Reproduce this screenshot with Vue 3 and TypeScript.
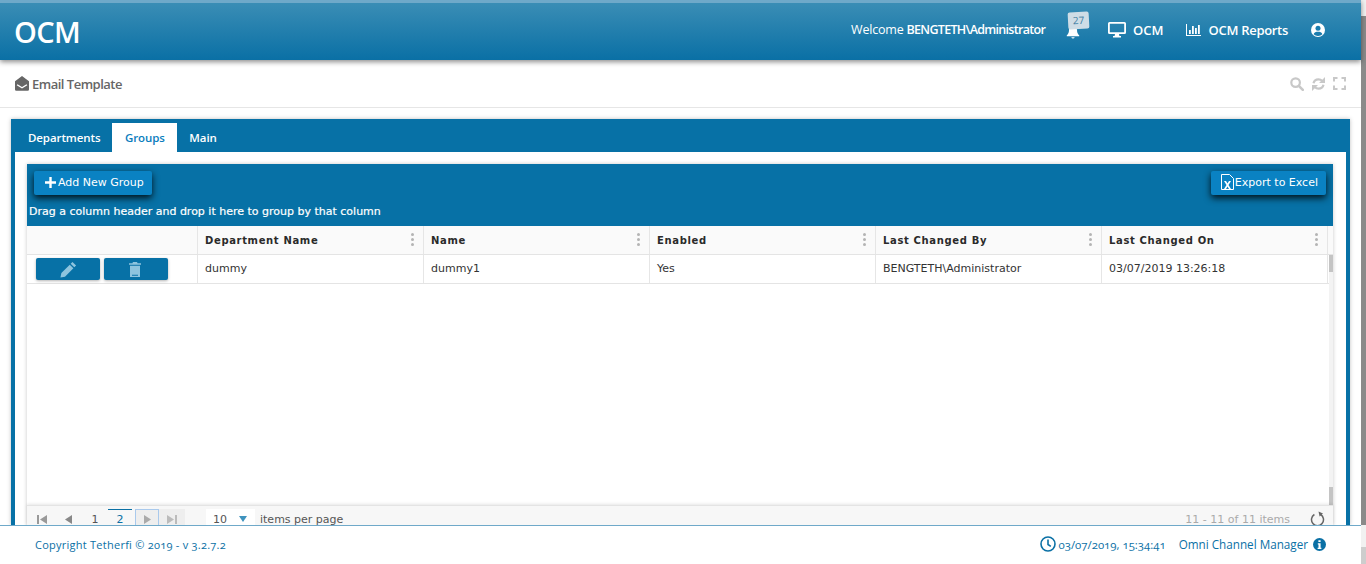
<script setup lang="ts">
interface Column {
  title: string
  value: string
}

const columns: Column[] = [
  { title: 'Department Name', value: 'dummy' },
  { title: 'Name', value: 'dummy1' },
  { title: 'Enabled', value: 'Yes' },
  { title: 'Last Changed By', value: 'BENGTETH\\Administrator' },
  { title: 'Last Changed On', value: '03/07/2019 13:26:18' },
]

const tabs = ['Departments', 'Groups', 'Main']
</script>

<template>
  <div class="page">
    <div class="viewport">
      <header class="topbar">
        <div class="brand">OCM</div>
        <nav class="topnav">
          <span class="welcome">Welcome <b>BENGTETH\Administrator</b></span>
          <span class="bell">
            <svg width="16" height="16" viewBox="0 0 16 16"><path fill="#fff" d="M8 1.500c-2.600 0-4 2-4 4.500 0 3-1 4.200-2.200 5.300v.9h12.400v-.9C13 10.200 12 9 12 6c0-2.500-1.400-4.500-4-4.500zM6.300 13.200a1.800 1.800 0 0 0 3.400 0z" /></svg>
            <span class="bell-count">27</span>
          </span>
          <span class="navlink monitor">
            <svg width="18" height="16" viewBox="0 0 18 16"><path fill="#fff" d="M1.500 0h15A1.500 1.500 0 0 1 18 1.500v9a1.500 1.500 0 0 1-1.500 1.500H11l.4 2H13v1.500H5V14h1.600L7 12H1.500A1.500 1.500 0 0 1 0 10.500v-9A1.500 1.500 0 0 1 1.500 0zM1.800 1.800v8.400h14.400V1.800z" /></svg>
            OCM
          </span>
          <span class="navlink reports">
            <svg width="15" height="12" viewBox="0 0 15 12"><path fill="#fff" d="M0 0h1v11h14v1H0zM3 6h1.800v4H3zM6 2h1.800v8H6zM9 4h1.800v6H9zM12 1h1.800v9H12z" /></svg>
            OCM Reports
          </span>
          <svg class="user" width="14" height="14" viewBox="0 0 14 14"><circle cx="7" cy="7" r="7" fill="#fff" /><circle cx="7" cy="5.300" r="2.500" fill="#1a7cae" /><path fill="#1a7cae" d="M2.600 11.200C3.200 9.300 5 8.700 7 8.700s3.800.6 4.400 2.500A6 6 0 0 1 7 13a6 6 0 0 1-4.400-1.800z" /></svg>
        </nav>
      </header>

      <div class="titlebar">
        <h1 class="title">
          <svg width="14" height="15" viewBox="0 0 14 15"><path fill="#666" d="M7 0l7 5.200V13.500a1.300 1.300 0 0 1-1.300 1.300H1.300A1.300 1.300 0 0 1 0 13.500V5.200zM2.500 8.300l-.8 1L7 12.600l5.300-3.300-.8-1L7 11z" /></svg>
          Email Template
        </h1>
        <div class="tools">
          <svg width="14" height="14" viewBox="0 0 14 14"><circle cx="5.600" cy="5.600" r="4.300" fill="none" stroke="#c8c8c8" stroke-width="2.200" /><path d="M8.800 8.800l4 4" stroke="#c8c8c8" stroke-width="2.600" stroke-linecap="round" /></svg>
          <svg width="15" height="14" viewBox="0 0 14 14"><path fill="none" stroke="#c8c8c8" stroke-width="2.200" d="M2 6.200C2.500 3.800 4.500 2.400 7 2.400c1.500 0 2.800.6 3.800 1.600M12 7.800c-.5 2.400-2.500 3.800-5 3.800-1.500 0-2.800-.6-3.800-1.600" /><path fill="#c8c8c8" d="M13.500 0v6h-6zM.5 14V8h6z" /></svg>
          <svg width="13" height="13" viewBox="0 0 13 13"><path fill="none" stroke="#c8c8c8" stroke-width="2" d="M1 4.500V1h3.500M8.500 1H12v3.500M12 8.500V12H8.500M4.500 12H1V8.500" /></svg>
        </div>
      </div>

      <main class="content">
        <section class="panel">
          <div class="tabstrip">
            <span v-for="tab in tabs" :key="tab" class="tab" :class="{ active: tab === 'Groups' }">{{ tab }}</span>
          </div>
          <div class="tabbody">
            <div class="grid">
              <div class="toolbar">
                <div class="toolbar-row">
                  <button class="action add">
                    <svg width="11" height="11" viewBox="0 0 11 11"><path fill="#fff" d="M4.300 0h2.400v4.300H11v2.400H6.700V11H4.300V6.700H0V4.300h4.300z" /></svg>
                    Add New Group
                  </button>
                  <button class="action export">
                    <svg width="13" height="16" viewBox="0 0 13 16"><path fill="none" stroke="#fff" d="M.5.500h8l4 4v11H.5z" /><path fill="#fff" d="M3 7h2l1.500 2.400L8 7h2L7.500 11 10 15H8l-1.500-2.500L5 15H3l2.500-4z" /></svg>
                    Export to Excel
                  </button>
                </div>
                <div class="drag-hint">Drag a column header and drop it here to group by that column</div>
              </div>

              <div class="table">
                <div class="tr thead">
                  <div class="cell actions-cell"></div>
                  <div v-for="col in columns" :key="col.title" class="cell th">
                    {{ col.title }}
                    <span class="kebab"><i></i><i></i><i></i></span>
                  </div>
                  <div class="gutter"></div>
                </div>
                <div class="tbody">
                  <div class="tr row">
                    <div class="cell actions-cell">
                      <span class="row-btn">
                        <svg width="17" height="17" viewBox="0 0 15 15"><path fill="#8ec4de" d="M11 .8l3.200 3.200-1.600 1.600-3.200-3.200zM8.600 3.200l3.200 3.200-7.400 7.400L.4 14.600l.8-4z" /></svg>
                      </span>
                      <span class="row-btn">
                        <svg class="trash" width="12" height="15" viewBox="0 0 12 15"><path fill="#8ec4de" d="M4 0h4l.6 1.300H12v1.500H0V1.300h3.400zM1 3.800h10V15H1zM3 12.800v1h6v-1z" /></svg>
                      </span>
                    </div>
                    <div v-for="col in columns" :key="col.title" class="cell td">{{ col.value }}</div>
                  </div>
                  <div class="vscroll"><span class="thumb-top"></span><span class="thumb-bottom"></span></div>
                </div>
              </div>

              <div class="pager">
                <svg class="pg" width="10" height="9" viewBox="0 0 10 9"><path fill="#999" d="M0 0h2v9H0zM10 0v9L3 4.500z" /></svg>
                <svg class="pg prev" width="8" height="9" viewBox="0 0 8 9"><path fill="#888" d="M8 0v9L1 4.500z" /></svg>
                <span class="pg-num first">1</span>
                <span class="pg-num current">2</span>
                <span class="pg-box focus"><svg width="7" height="9" viewBox="0 0 7 9"><path fill="#aaa" d="M0 0v9l7-4.500z" /></svg></span>
                <span class="pg-box last"><svg width="10" height="9" viewBox="0 0 10 9"><path fill="#bbb" d="M0 0v9l7-4.500zM8 0h2v9H8z" /></svg></span>
                <span class="page-size">10<i class="caret"></i></span>
                <span class="per-page">items per page</span>
                <span class="range">11 - 11 of 11 items</span>
                <svg class="reload" width="15" height="16" viewBox="0 0 15 16"><path fill="none" stroke="#666" stroke-width="1.500" d="M10.600 3.500a6 6 0 1 1-6.200 0" /><path fill="#666" d="M8.500.5l4.500 2-3.400 3z" /></svg>
              </div>
            </div>
          </div>
        </section>
      </main>

      <footer class="footer">
        <span class="copyright">Copyright Tetherfi © 2019 - v 3.2.7.2</span>
        <span class="foot-right">
          <svg width="16" height="16" viewBox="0 0 16 16"><circle cx="8" cy="8" r="7" fill="none" stroke="#0a70a5" stroke-width="1.600" /><path fill="none" stroke="#0a70a5" stroke-width="1.600" d="M8 3.500V8.500l2.800 1.800" /></svg>
          <span class="clock">03/07/2019, 15:34:41</span>
          <span class="product">Omni Channel Manager</span>
          <svg width="13" height="13" viewBox="0 0 13 13"><circle cx="6.500" cy="6.500" r="6.500" fill="#0a70a5" /><path fill="#fff" d="M5.400 2.300h2.200v1.800H5.400zM4.800 5.200h2.800v4.500h.8v1.200H4.600V9.700h.9V6.400h-.7z" /></svg>
        </span>
      </footer>
    </div>
    <div class="page-scroll">
      <span class="page-thumb"></span>
      <span class="lower-thumb"></span>
    </div>
  </div>
</template>

<style>
html,
body {
  margin: 0;
  height: 564px;
  overflow: hidden;
  background: #fff;
}
</style>

<style scoped>
.page {
  display: flex;
  height: 564px;
  overflow: hidden;
  font-family: "Open Sans", sans-serif;
}
.viewport {
  flex: 1;
  min-width: 0;
  display: flex;
  flex-direction: column;
}
.page-scroll {
  width: 5px;
  flex: none;
  display: flex;
  flex-direction: column;
  background: #f1f1f1;
}
.page-thumb {
  display: block;
  height: 509px;
  margin-top: 16px;
  background: #8a8a8a;
}
.lower-thumb {
  display: block;
  flex: 1;
  margin-top: 22px;
  background: #cdcdcd;
}

.topbar {
  height: 57px;
  flex: none;
  display: flex;
  align-items: center;
  justify-content: space-between;
  border-top: 3px solid #6fa9c9;
  background: linear-gradient(#3a8db5, #0a70a5);
  box-shadow: 0 2px 5px rgba(0, 0, 0, 0.45);
  color: #fff;
  position: relative;
  z-index: 2;
}
.brand {
  margin-left: 14px;
  font-size: 29px;
  font-weight: 600;
  letter-spacing: -0.6px;
}
.topnav {
  display: flex;
  align-items: center;
  font-size: 13px;
  font-weight: 600;
  margin: -4px 36px 0 0;
}
.welcome {
  font-weight: 400;
  font-size: 12.5px;
  letter-spacing: -0.2px;
}
.welcome b {
  font-weight: 600;
  letter-spacing: -0.7px;
}
.bell {
  position: relative;
  display: flex;
  margin-left: 20px;
  margin-top: 4px;
}
.bell-count {
  position: absolute;
  left: 3px;
  top: -12px;
  width: 21px;
  height: 17px;
  background: #cfdde6;
  color: #3f7ea3;
  font-size: 10px;
  line-height: 16px;
  font-weight: 400;
  text-align: center;
  border-radius: 2px;
  transform: rotate(-3deg);
}
.navlink {
  display: flex;
  align-items: center;
  gap: 7px;
}
.monitor {
  margin-left: 27px;
}
.reports {
  margin-left: 22px;
  letter-spacing: -0.3px;
}
.reports svg {
  margin-right: 1px;
}
.user {
  margin-left: 23px;
}

.titlebar {
  height: 47px;
  flex: none;
  display: flex;
  align-items: center;
  justify-content: space-between;
  border-bottom: 1px solid #e6e6e6;
}
.title {
  margin: 0 0 0 15px;
  display: flex;
  align-items: center;
  gap: 3px;
  font-size: 13px;
  font-weight: 600;
  letter-spacing: -0.5px;
  color: #666;
}
.tools {
  display: flex;
  align-items: center;
  gap: 7px;
  margin-right: 15px;
}

.content {
  flex: 1;
  min-height: 0;
  overflow: hidden;
  padding: 11px 11px 0;
  background: #fff;
}
.panel {
  height: 100%;
  border: 4px solid #0771a6;
  border-top-width: 0;
  border-bottom: 0;
  display: flex;
  flex-direction: column;
  box-shadow: 0 0 4px rgba(0, 0, 0, 0.25);
}
.tabstrip {
  height: 33px;
  flex: none;
  display: flex;
  align-items: flex-end;
  background: #0771a6;
  margin: 0 -4px;
  padding-left: 5px;
}
.tab {
  height: 29px;
  padding: 0 12px;
  display: flex;
  align-items: center;
  font-size: 11.5px;
  font-weight: 600;
  letter-spacing: -0.09px;
  color: #fff;
}
.tab.active {
  padding: 0 12.5px;
  background: #fff;
  color: #0a7dbd;
}
.tabbody {
  flex: 1;
  min-height: 0;
  padding: 12px 13px 0 12px;
  background: #fff;
  display: flex;
}
.grid {
  flex: 1;
  min-width: 0;
  display: flex;
  flex-direction: column;
  box-shadow: 0 0 4px rgba(0, 0, 0, 0.22);
}
.toolbar {
  height: 62px;
  flex: none;
  display: flex;
  flex-direction: column;
  background: #0771a6;
  font-family: "DejaVu Sans", sans-serif;
  color: #fff;
}
.toolbar-row {
  display: flex;
  justify-content: space-between;
  padding: 7px 7px 0;
}
.action {
  height: 24px;
  border: 0;
  border-radius: 2px;
  padding: 0 8px 2px 11px;
  display: flex;
  align-items: center;
  gap: 2px;
  background: #0a82c3;
  color: #fff;
  font-family: inherit;
  font-size: 11px;
  box-shadow: 0 3px 7px rgba(0, 0, 0, 0.85);
}
.action.export {
  padding: 0 8px 2px 10px;
  gap: 1px;
}
.drag-hint {
  margin: 10px 0 0 2px;
  font-size: 11px;
  -webkit-text-stroke: 0.2px #fff;
}

.table {
  flex: 1;
  min-height: 0;
  display: flex;
  flex-direction: column;
  font-family: "DejaVu Sans", sans-serif;
  font-size: 11px;
  background: #fff;
}
.tr {
  display: grid;
  grid-template-columns: 171px 226px 226px 226px 226px 226px 4px;
}
.thead {
  height: 28px;
  flex: none;
  border-bottom: 1px solid #e4e4e4;
  background: #fafafa;
}
.tbody {
  flex: 1;
  min-height: 0;
  display: flex;
}
.row {
  flex: 1;
  height: 28px;
  border-bottom: 1px solid #e4e4e4;
  grid-template-columns: 171px 226px 226px 226px 226px 226px;
}
.cell {
  display: flex;
  align-items: center;
  border-right: 1px solid #e6e6e6;
  padding-left: 7px;
  position: relative;
  color: #333;
}
.td {
  padding-bottom: 2px;
}
.th {
  font-weight: 700;
  letter-spacing: 0.65px;
  font-size: 10px;
  color: #2a2a2a;
}
.kebab {
  position: absolute;
  right: 9px;
  top: 7px;
  display: flex;
  flex-direction: column;
  gap: 2px;
}
.kebab i {
  width: 3px;
  height: 3px;
  border-radius: 50%;
  background: #b4b4b4;
}
.gutter {
  background: #fafafa;
}
.actions-cell {
  padding-left: 9px;
  gap: 4px;
}
.row-btn {
  width: 64px;
  height: 22px;
  border-radius: 2px;
  background: #0771a6;
  display: flex;
  align-items: center;
  justify-content: center;
  box-shadow: 0 1px 3px rgba(0, 0, 0, 0.3);
}
.trash {
  margin-right: 2px;
}
.vscroll {
  width: 4px;
  flex: none;
  background: #f3f3f3;
  display: flex;
  flex-direction: column;
  justify-content: space-between;
}
.thumb-top {
  height: 17px;
  background: #c4c4c4;
}
.thumb-bottom {
  height: 18px;
  background: #c4c4c4;
}

.pager {
  height: 25px;
  flex: none;
  margin-bottom: -5px;
  display: flex;
  align-items: center;
  background: #f7f7f7;
  border-top: 1px solid #e4e4e4;
  box-shadow: 0 -1px 3px rgba(0, 0, 0, 0.1);
  font-family: "DejaVu Sans", sans-serif;
  font-size: 11px;
  color: #555;
  padding-top: 2px;
  box-sizing: border-box;
  position: relative;
}
.pg {
  margin-left: 10px;
}
.prev {
  margin-left: 17px;
}
.pg-num {
  width: 24px;
  text-align: center;
  line-height: 20px;
  border-top: 1px solid transparent;
}
.pg-num.first {
  margin-left: 11px;
}
.pg-num.current {
  color: #0a70a5;
  border-top-color: #0a70a5;
  margin-left: 1px;
}
.pg-box {
  width: 24px;
  height: 21px;
  flex: none;
  display: flex;
  align-items: center;
  justify-content: center;
  background: #eee;
  box-sizing: border-box;
}
.pg-box.last {
  width: 26px;
}
.pg-box.focus {
  border: 1px solid #a9c9ec;
  margin-left: 3px;
}
.page-size {
  width: 49px;
  height: 21px;
  margin-left: 21px;
  padding-left: 7px;
  display: flex;
  align-items: center;
  justify-content: space-between;
  background: #fff;
  box-sizing: border-box;
}
.caret {
  width: 0;
  height: 0;
  margin-right: 8px;
  border: 4.5px solid transparent;
  border-top: 6px solid #3f93be;
  border-bottom: 0;
}
.per-page {
  margin-left: 5px;
}
.range {
  margin-left: auto;
  color: #aaa;
}
.reload {
  margin: 0 8px 0 20px;
}

.footer {
  height: 36px;
  flex: none;
  display: flex;
  align-items: center;
  justify-content: space-between;
  border-top: 1px solid #6fa9c9;
  padding: 0 35px 2px;
  background: #fff;
  color: #0a70a5;
  font-size: 11px;
  font-variant-numeric: oldstyle-nums;
  position: relative;
  z-index: 2;
}
.copyright {
  letter-spacing: 0.25px;
}
.foot-right {
  display: flex;
  align-items: center;
}
.clock {
  margin-left: 3px;
  font-size: 11.4px;
}
.product {
  margin: 0 5px 0 13px;
  font-size: 11.7px;
}
</style>
